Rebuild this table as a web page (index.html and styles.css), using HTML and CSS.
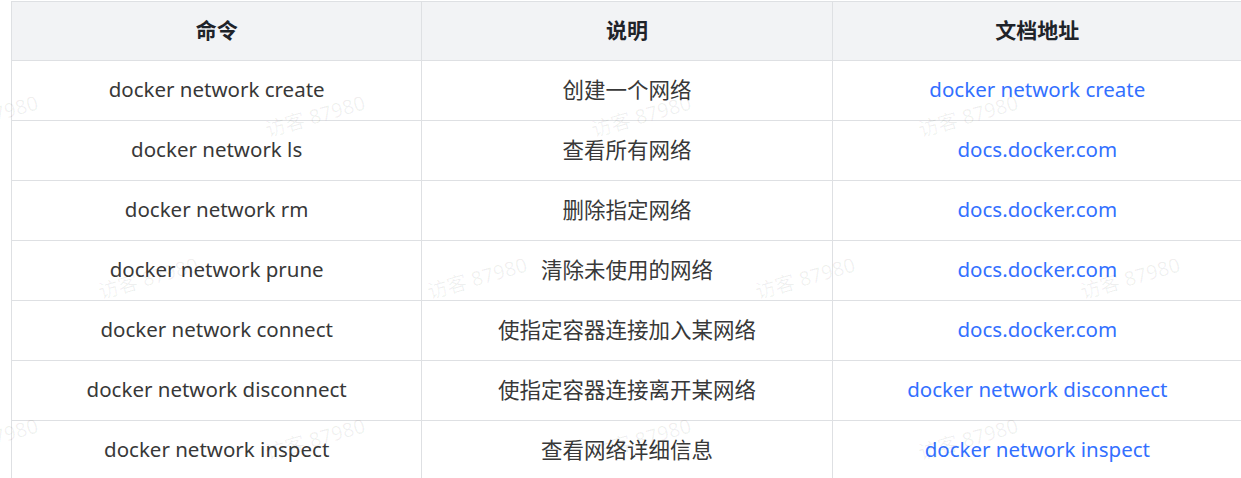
FILE: index.html
```html
<!DOCTYPE html>
<html lang="zh-CN">
<head>
<meta charset="utf-8">
<title>docker network</title>
<link rel="stylesheet" href="styles.css">
</head>
<body>
<div class="page">
  <table class="cmd-table">
    <thead>
      <tr><th>命令</th><th>说明</th><th>文档地址</th></tr>
    </thead>
    <tbody>
      <tr><td class="cmd">docker network create</td><td class="desc">创建一个网络</td><td class="cmd"><a class="link" href="#">docker network create</a></td></tr>
      <tr><td class="cmd">docker network ls</td><td class="desc">查看所有网络</td><td class="cmd"><a class="link" href="#">docs.docker.com</a></td></tr>
      <tr><td class="cmd">docker network rm</td><td class="desc">删除指定网络</td><td class="cmd"><a class="link" href="#">docs.docker.com</a></td></tr>
      <tr><td class="cmd">docker network prune</td><td class="desc">清除未使用的网络</td><td class="cmd"><a class="link" href="#">docs.docker.com</a></td></tr>
      <tr><td class="cmd">docker network connect</td><td class="desc">使指定容器连接加入某网络</td><td class="cmd"><a class="link" href="#">docs.docker.com</a></td></tr>
      <tr><td class="cmd">docker network disconnect</td><td class="desc">使指定容器连接离开某网络</td><td class="cmd"><a class="link" href="#">docker network disconnect</a></td></tr>
      <tr><td class="cmd">docker network inspect</td><td class="desc">查看网络详细信息</td><td class="cmd"><a class="link" href="#">docker network inspect</a></td></tr>
    </tbody>
  </table>
  <div class="wm" style="left:-12px;top:115px">访客 87980</div>
  <div class="wm" style="left:315px;top:115px">访客 87980</div>
  <div class="wm" style="left:641px;top:115px">访客 87980</div>
  <div class="wm" style="left:968px;top:115px">访客 87980</div>
  <div class="wm" style="left:148px;top:277px">访客 87980</div>
  <div class="wm" style="left:477px;top:277px">访客 87980</div>
  <div class="wm" style="left:805px;top:277px">访客 87980</div>
  <div class="wm" style="left:1130px;top:277px">访客 87980</div>
  <div class="wm" style="left:-12px;top:438px">访客 87980</div>
  <div class="wm" style="left:315px;top:438px">访客 87980</div>
  <div class="wm" style="left:641px;top:438px">访客 87980</div>
  <div class="wm" style="left:968px;top:438px">访客 87980</div>
</div>
</body>
</html>
```
FILE: styles.css
```css
html, body {
  margin: 0;
  padding: 0;
  background: #ffffff;
  overflow: hidden;
}
.page {
  position: relative;
  width: 1241px;
  height: 478px;
  overflow: hidden;
  padding-top: 1px;
  padding-left: 11px;
  box-sizing: border-box;
}
.cmd-table {
  width: 1232px;
  table-layout: fixed;
  border-collapse: separate;
  border-spacing: 0;
  border-top: 1px solid #dee0e3;
  border-left: 1px solid #dee0e3;
  font-family: "Noto Sans", "Noto Sans CJK SC", sans-serif;
  font-size: 21px;
  color: #383838;
}
.cmd-table th,
.cmd-table td {
  box-sizing: border-box;
  border-right: 1px solid #dee0e3;
  border-bottom: 1px solid #dee0e3;
  padding: 0 10px 3px;
  text-align: center;
  vertical-align: middle;
  white-space: nowrap;
}
.cmd-table th {
  height: 59px;
  background: #f2f3f5;
  color: #1f2329;
  font-weight: 700;
  padding-bottom: 4px;
}
.cmd-table td {
  height: 60px;
}
.cmd-table td.cmd {
  font-size: 20.5px;
}
.cmd-table td.desc {
  font-size: 21.5px;
  padding-bottom: 5px;
}
.link {
  color: #3370ff;
  text-decoration: none;
}
.wm {
  position: absolute;
  transform: translate(-50%, -50%) rotate(-16deg);
  font-family: "Noto Sans", "Noto Sans CJK SC", sans-serif;
  font-size: 20px;
  color: rgba(0, 0, 0, 0.06);
  white-space: nowrap;
  pointer-events: none;
}
```
